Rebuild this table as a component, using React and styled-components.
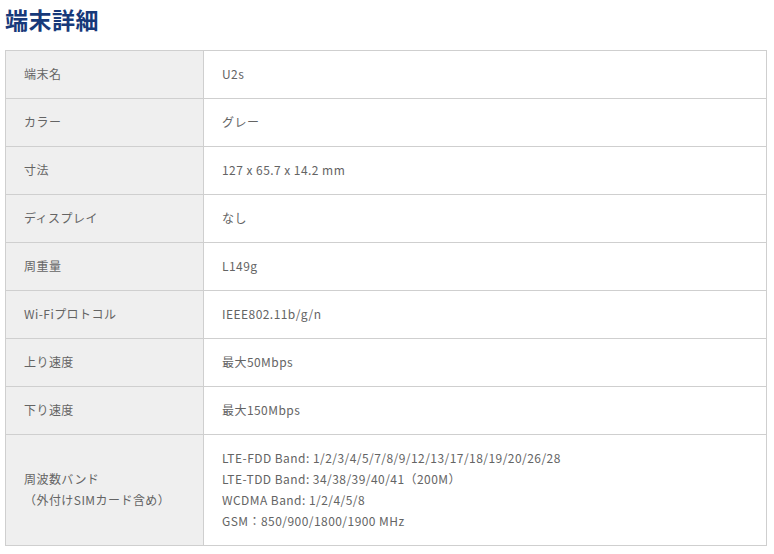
import React from 'react';
import styled, {createGlobalStyle} from 'styled-components';

const GlobalStyle = createGlobalStyle`
body {
  margin: 0;
  background: #fff;
  font-family: "Noto Sans CJK JP", "Noto Sans", sans-serif;
}`;

const Page = styled.div`
padding: 3px 7px 0 5px;
`;

const Title = styled.h2`
margin: 0 0 14px;
font-size: 23px;
line-height: 33px;
font-weight: 700;
color: #17397a;
letter-spacing: 0.5px;
`;

const Table = styled.div`
display: grid;
grid-template-columns: 198px 1fr;
border-top: 1px solid #cfcfcf;
border-left: 1px solid #cfcfcf;
`;

const Cell = styled.div`
display: flex;
flex-direction: column;
justify-content: center;
min-height: ${({tall}) => (tall ? '111px' : '48px')};
padding: 0 18px 3px;
box-sizing: border-box;
border-right: 1px solid #cfcfcf;
border-bottom: 1px solid #cfcfcf;
background: ${({head}) => (head ? '#efefef' : '#fff')};
font-size: 12px;
line-height: 21px;
color: #646464;
letter-spacing: 0.45px;
`;

const rows = [
  ['端末名', ['U2s']],
  ['カラー', ['グレー']],
  ['寸法', ['127 x 65.7 x 14.2 mm']],
  ['ディスプレイ', ['なし']],
  ['周重量', ['L149g']],
  ['Wi-Fiプロトコル', ['IEEE802.11b/g/n']],
  ['上り速度', ['最大50Mbps']],
  ['下り速度', ['最大150Mbps']],
  [
    ['周波数バンド', '（外付けSIMカード含め）'],
    [
      'LTE-FDD Band: 1/2/3/4/5/7/8/9/12/13/17/18/19/20/26/28',
      'LTE-TDD Band: 34/38/39/40/41（200M）',
      'WCDMA Band: 1/2/4/5/8',
      'GSM：850/900/1800/1900 MHz',
    ],
  ],
];

const App = () => {
  return (
    <Page>
      <GlobalStyle />
      <Title>端末詳細</Title>
      <Table>
        {rows.map(([label, values], i) => {
          const tall = values.length > 1;
          const labels = Array.isArray(label) ? label : [label];
          return (
            <React.Fragment key={i}>
              <Cell head tall={tall}>
                {labels.map((l) => (
                  <div key={l}>{l}</div>
                ))}
              </Cell>
              <Cell tall={tall}>
                {values.map((v) => (
                  <div key={v}>{v}</div>
                ))}
              </Cell>
            </React.Fragment>
          );
        })}
      </Table>
    </Page>
  );
};

export default App;
